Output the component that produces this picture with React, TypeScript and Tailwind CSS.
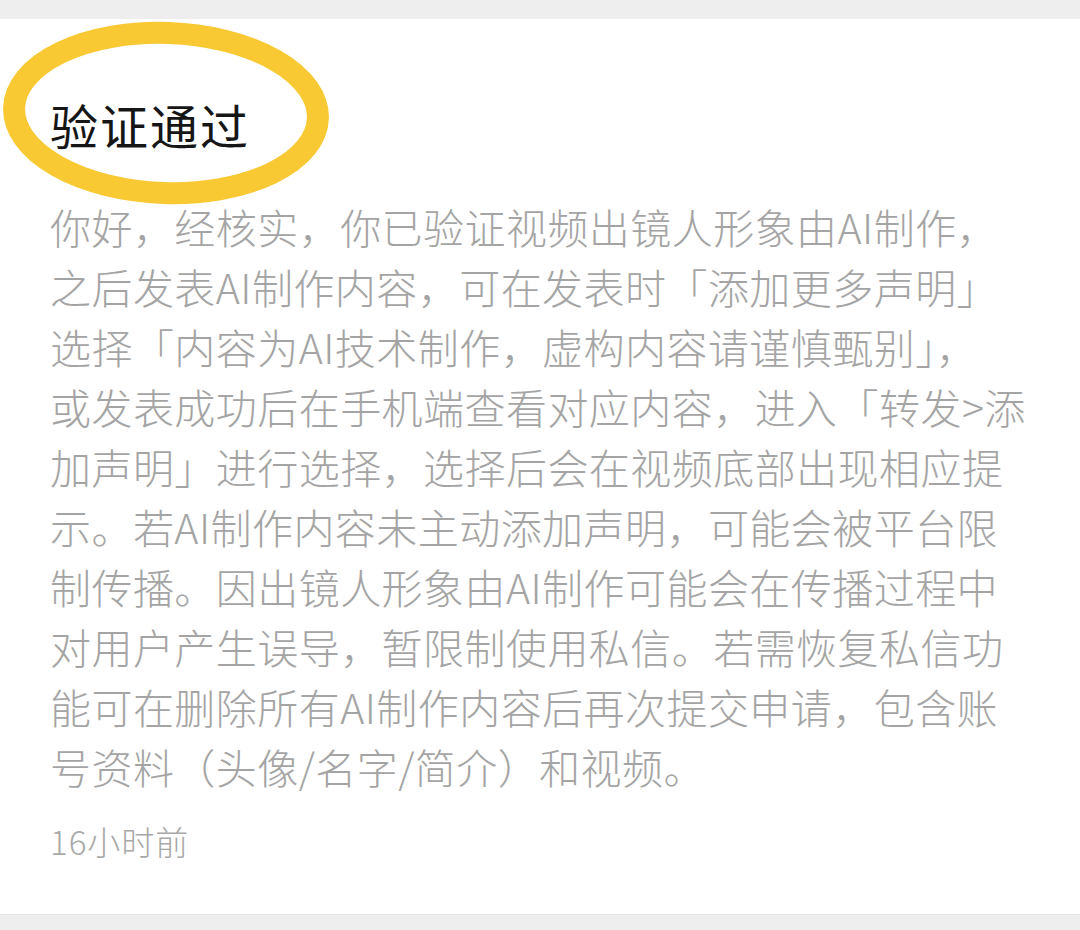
import React from "react";

const lines = [
  "你好，经核实，你已验证视频出镜人形象由AI制作，",
  "之后发表AI制作内容，可在发表时「添加更多声明」",
  "选择「内容为AI技术制作，虚构内容请谨慎甄别」，",
  "或发表成功后在手机端查看对应内容，进入「转发>添",
  "加声明」进行选择，选择后会在视频底部出现相应提",
  "示。若AI制作内容未主动添加声明，可能会被平台限",
  "制传播。因出镜人形象由AI制作可能会在传播过程中",
  "对用户产生误导，暂限制使用私信。若需恢复私信功",
  "能可在删除所有AI制作内容后再次提交申请，包含账",
  "号资料（头像/名字/简介）和视频。",
];

export default function App() {
  return (
    <div
      className="w-[1080px] h-[930px] bg-[#eeeeee] pt-[19px] overflow-hidden"
      style={{ fontFamily: '"Noto Sans CJK SC", "Noto Sans", sans-serif' }}
    >
      <div className="relative bg-white h-[896px] px-[50px] pt-[75px] border-b border-[#e2e2e2]">
        <svg
          className="absolute left-0 top-0 w-[1080px] h-[896px] pointer-events-none"
          width="1080"
          height="896"
          viewBox="0 0 1080 896"
        >
          <ellipse
            cx="166"
            cy="94"
            rx="152"
            ry="80"
            fill="none"
            stroke="#f8c932"
            strokeWidth="22"
            transform="rotate(2 166 94)"
          />
        </svg>
        <div className="relative text-[48px] leading-[60px] text-[#161616] tracking-[2px]">
          验证通过
        </div>
        <div className="relative mt-[42px] text-[41px] leading-[60px] text-[#a4a4a4] tracking-[0.45px] font-light">
          {lines.map((l, i) => (
            <div key={i} className="whitespace-nowrap">
              {l}
            </div>
          ))}
        </div>
        <div className="mt-[25px] text-[33px] leading-[40px] text-[#a8a8a8] tracking-[1px] font-light">
          16小时前
        </div>
      </div>
    </div>
  );
}
